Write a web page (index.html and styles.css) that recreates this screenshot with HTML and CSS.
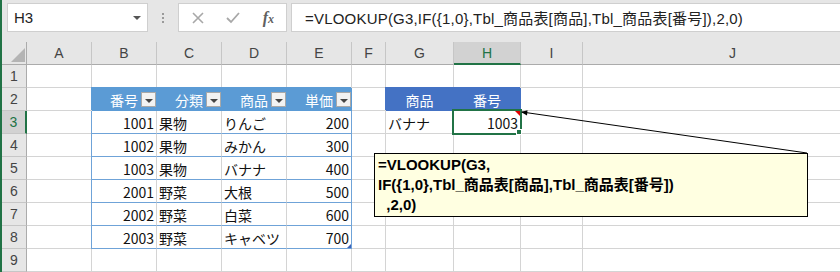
FILE: index.html
```html
<!DOCTYPE html>
<html lang="ja">
<head>
  <meta charset="UTF-8">
  <title>VLOOKUP 左方向検索</title>
  <link rel="stylesheet" href="styles.css">
</head>

<body>

<div class="app">
  <!-- Formula bar -->
  <div class="formula-bar">
    <div class="name-box"><span>H3</span><span class="caret"></span></div>
    <div class="grip"><i></i><i></i><i></i></div>
    <div class="fx-tools">
      <span class="tool">
        <svg width="12" height="12" viewBox="0 0 12 12"><path d="M1 1 L11 11 M11 1 L1 11" stroke="#a8a8a8" stroke-width="1.6" fill="none"/></svg>
      </span>
      <span class="tool">
        <svg width="14" height="12" viewBox="0 0 14 12"><path d="M1 6 L5 10 L13 1" stroke="#a8a8a8" stroke-width="1.8" fill="none"/></svg>
      </span>
      <span class="tool fx">f<span class="fx-x">x</span></span>
    </div>
    <div class="formula">=VLOOKUP(G3,IF({1,0},Tbl_商品表[商品],Tbl_商品表[番号]),2,0)</div>
  </div>

  <!-- Sheet grid -->
  <div class="sheet">
    <div class="corner"></div>
    <div class="ch">A</div><div class="ch">B</div><div class="ch">C</div><div class="ch">D</div><div class="ch">E</div>
    <div class="ch">F</div><div class="ch">G</div><div class="ch sel">H</div><div class="ch">I</div><div class="ch">J</div>

    <div class="rh">1</div>
    <div class="c"></div><div class="c"></div><div class="c"></div><div class="c"></div><div class="c"></div>
    <div class="c"></div><div class="c"></div><div class="c"></div><div class="c"></div><div class="c"></div>

    <div class="rh">2</div>
    <div class="c"></div>
    <div class="c th">番号<span class="filter"></span></div>
    <div class="c th">分類<span class="filter"></span></div>
    <div class="c th">商品<span class="filter"></span></div>
    <div class="c th last">単価<span class="filter"></span></div>
    <div class="c"></div>
    <div class="c th2">商品</div>
    <div class="c th2">番号</div>
    <div class="c"></div><div class="c"></div>

    <div class="rh sel">3</div>
    <div class="c"></div>
    <div class="c tb first num">1001</div><div class="c tb">果物</div><div class="c tb">りんご</div><div class="c tb last num">200</div>
    <div class="c"></div>
    <div class="c">バナナ</div>
    <div class="c num noted">1003</div>
    <div class="c"></div><div class="c"></div>

    <div class="rh">4</div>
    <div class="c"></div>
    <div class="c tb first num">1002</div><div class="c tb">果物</div><div class="c tb">みかん</div><div class="c tb last num">300</div>
    <div class="c"></div><div class="c"></div><div class="c"></div><div class="c"></div><div class="c"></div>

    <div class="rh">5</div>
    <div class="c"></div>
    <div class="c tb first num">1003</div><div class="c tb">果物</div><div class="c tb">バナナ</div><div class="c tb last num">400</div>
    <div class="c"></div><div class="c"></div><div class="c"></div><div class="c"></div><div class="c"></div>

    <div class="rh">6</div>
    <div class="c"></div>
    <div class="c tb first num">2001</div><div class="c tb">野菜</div><div class="c tb">大根</div><div class="c tb last num">500</div>
    <div class="c"></div><div class="c"></div><div class="c"></div><div class="c"></div><div class="c"></div>

    <div class="rh">7</div>
    <div class="c"></div>
    <div class="c tb first num">2002</div><div class="c tb">野菜</div><div class="c tb">白菜</div><div class="c tb last num">600</div>
    <div class="c"></div><div class="c"></div><div class="c"></div><div class="c"></div><div class="c"></div>

    <div class="rh">8</div>
    <div class="c"></div>
    <div class="c tb first num">2003</div><div class="c tb">野菜</div><div class="c tb">キャベツ</div><div class="c tb last num resize">700</div>
    <div class="c"></div><div class="c"></div><div class="c"></div><div class="c"></div><div class="c"></div>

    <div class="rh">9</div>
    <div class="c"></div><div class="c"></div><div class="c"></div><div class="c"></div><div class="c"></div>
    <div class="c"></div><div class="c"></div><div class="c"></div><div class="c"></div><div class="c"></div>

    <!-- Active cell H3 -->
    <div class="selection"></div>
    <div class="fill-handle"></div>

    <!-- Comment on H3 -->
    <svg class="leader" width="840" height="230">
      <line x1="520" y1="70" x2="805" y2="111" stroke="#000" stroke-width="1"/>
      <polygon points="519,70 525,73.5 525.5,68.2" fill="#000"/>
    </svg>
    <div class="comment">=VLOOKUP(G3,
IF({1,0},Tbl_商品表[商品],Tbl_商品表[番号])
  ,2,0)</div>
  </div>
</div>

</body>
</html>
```

FILE: styles.css
```css
body {
  margin: 0;
  padding: 0;
  background-color: #ffffff;
  font-family: "Liberation Sans", "Noto Sans CJK JP", sans-serif;
  overflow: hidden;
}

.app {
  border-left: 2px solid #217346;
  height: 272px;
  overflow: hidden;
}

/* Formula bar */
.formula-bar {
  display: flex;
  align-items: flex-start;
  height: 42px;
  padding: 3px 0 0 5px;
  box-sizing: border-box;
  background-color: #e6e6e6;
}

.name-box {
  width: 141px;
  height: 29px;
  padding: 0 6px;
  display: flex;
  align-items: center;
  justify-content: space-between;
  background-color: #ffffff;
  border: 1px solid #cfcfcf;
  box-sizing: border-box;
  font-size: 15px;
  color: #222;
}

.caret {
  width: 0;
  height: 0;
  border-left: 4px solid transparent;
  border-right: 4px solid transparent;
  border-top: 4px solid #555;
}

.grip {
  width: 30px;
  height: 29px;
  display: flex;
  flex-direction: column;
  align-items: center;
  justify-content: center;
  gap: 2px;
}

.grip i {
  width: 2px;
  height: 2px;
  background-color: #9a9a9a;
}

.fx-tools {
  width: 109px;
  height: 29px;
  padding-left: 1px;
  display: flex;
  align-items: center;
  background-color: #ffffff;
  border: 1px solid #cfcfcf;
  box-sizing: border-box;
}

.tool {
  width: 36px;
  display: flex;
  justify-content: center;
  align-items: center;
}

.fx {
  font-family: "Liberation Serif", serif;
  font-style: italic;
  font-weight: bold;
  font-size: 16px;
  color: #606060;
}

.fx-x {
  font-size: 12px;
  margin-top: 4px;
}

.formula {
  flex: 1;
  height: 29px;
  margin-left: 4px;
  padding-left: 13px;
  display: flex;
  align-items: center;
  background-color: #ffffff;
  border: 1px solid #cfcfcf;
  border-right: none;
  box-sizing: border-box;
  font-size: 15px;
  letter-spacing: 0.2px;
  color: #222;
  white-space: nowrap;
}

/* Sheet */
.sheet {
  position: relative;
  display: grid;
  grid-template-columns: 25px 65px 65px 65px 65px 65px 34px 68px 67px 62px 300px;
  grid-auto-rows: 23px;
  font-size: 14px;
}

.sheet > div {
  box-sizing: border-box;
}

.corner, .ch, .rh {
  background-color: #e6e6e6;
  color: #444;
  display: flex;
  align-items: center;
  justify-content: center;
  font-size: 14px;
}

.corner {
  position: relative;
  border-right: 1px solid #ababab;
  border-bottom: 1px solid #ababab;
}

.corner::after {
  content: "";
  position: absolute;
  right: 1px;
  bottom: 2px;
  border-left: 14px solid transparent;
  border-bottom: 14px solid #b4b4b4;
}

.ch {
  border-right: 1px solid #c6c6c6;
  border-bottom: 1px solid #ababab;
}

.rh {
  border-right: 1px solid #ababab;
  border-bottom: 1px solid #c6c6c6;
}

.ch.sel {
  background-color: #d2d2d2;
  color: #217346;
  border-bottom: 2px solid #217346;
}

.rh.sel {
  background-color: #d2d2d2;
  color: #217346;
  border-right: 2px solid #217346;
}

.c {
  padding: 1px 2px 0 2px;
  display: flex;
  align-items: center;
  border-right: 1px solid #d4d4d4;
  border-bottom: 1px solid #d4d4d4;
  font-family: "Noto Sans CJK JP", sans-serif;
  color: #111;
  white-space: nowrap;
  overflow: hidden;
}

.num {
  justify-content: flex-end;
}

/* 商品表 table */
.th {
  justify-content: flex-end;
  padding-right: 0;
  background-color: #5b9bd5;
  border-color: #5b9bd5;
  box-shadow: -1px -1px 0 0 #5b9bd5;
  color: #ffffff;
}

.filter {
  width: 15px;
  height: 15px;
  margin-left: 3px;
  box-sizing: border-box;
  display: flex;
  align-items: center;
  justify-content: center;
  background-color: #f2f2f2;
  border: 1px solid #a8a8a8;
}

.filter::after {
  content: "";
  border-left: 4px solid transparent;
  border-right: 4px solid transparent;
  border-top: 4px solid #444;
  margin-top: 2px;
}

.tb {
  border-bottom-color: #6fa3d8;
}

.tb.first {
  box-shadow: -1px 0 0 0 #6fa3d8;
}

.tb.last {
  border-right-color: #6fa3d8;
}

.resize {
  position: relative;
}

.resize::after {
  content: "";
  position: absolute;
  right: 0;
  bottom: 0;
  border-left: 4px solid transparent;
  border-bottom: 4px solid #3f62b8;
}

.th2 {
  justify-content: center;
  background-color: #4472c4;
  border-color: #4472c4;
  box-shadow: -1px -1px 0 0 #4472c4;
  color: #ffffff;
}

.noted {
  position: relative;
}

.noted::after {
  content: "";
  position: absolute;
  top: 0;
  right: 0;
  border-left: 5px solid transparent;
  border-top: 5px solid #e00000;
}

/* Active cell */
.selection {
  position: absolute;
  left: 450px;
  top: 67px;
  width: 70px;
  height: 26px;
  border: 2px solid #217346;
}

.fill-handle {
  position: absolute;
  left: 514px;
  top: 87px;
  width: 6px;
  height: 6px;
  background-color: #217346;
  border: 1px solid #ffffff;
}

/* Comment */
.leader {
  position: absolute;
  left: 0;
  top: 0;
  pointer-events: none;
}

.comment {
  position: absolute;
  left: 372px;
  top: 111px;
  width: 434px;
  height: 64px;
  padding: 1px 3px;
  box-sizing: border-box;
  background-color: #ffffe1;
  border: 1px solid #000;
  font-family: "Liberation Sans", "Noto Sans CJK JP", sans-serif;
  font-weight: bold;
  font-size: 15px;
  line-height: 20px;
  color: #000;
  white-space: pre;
}
```
